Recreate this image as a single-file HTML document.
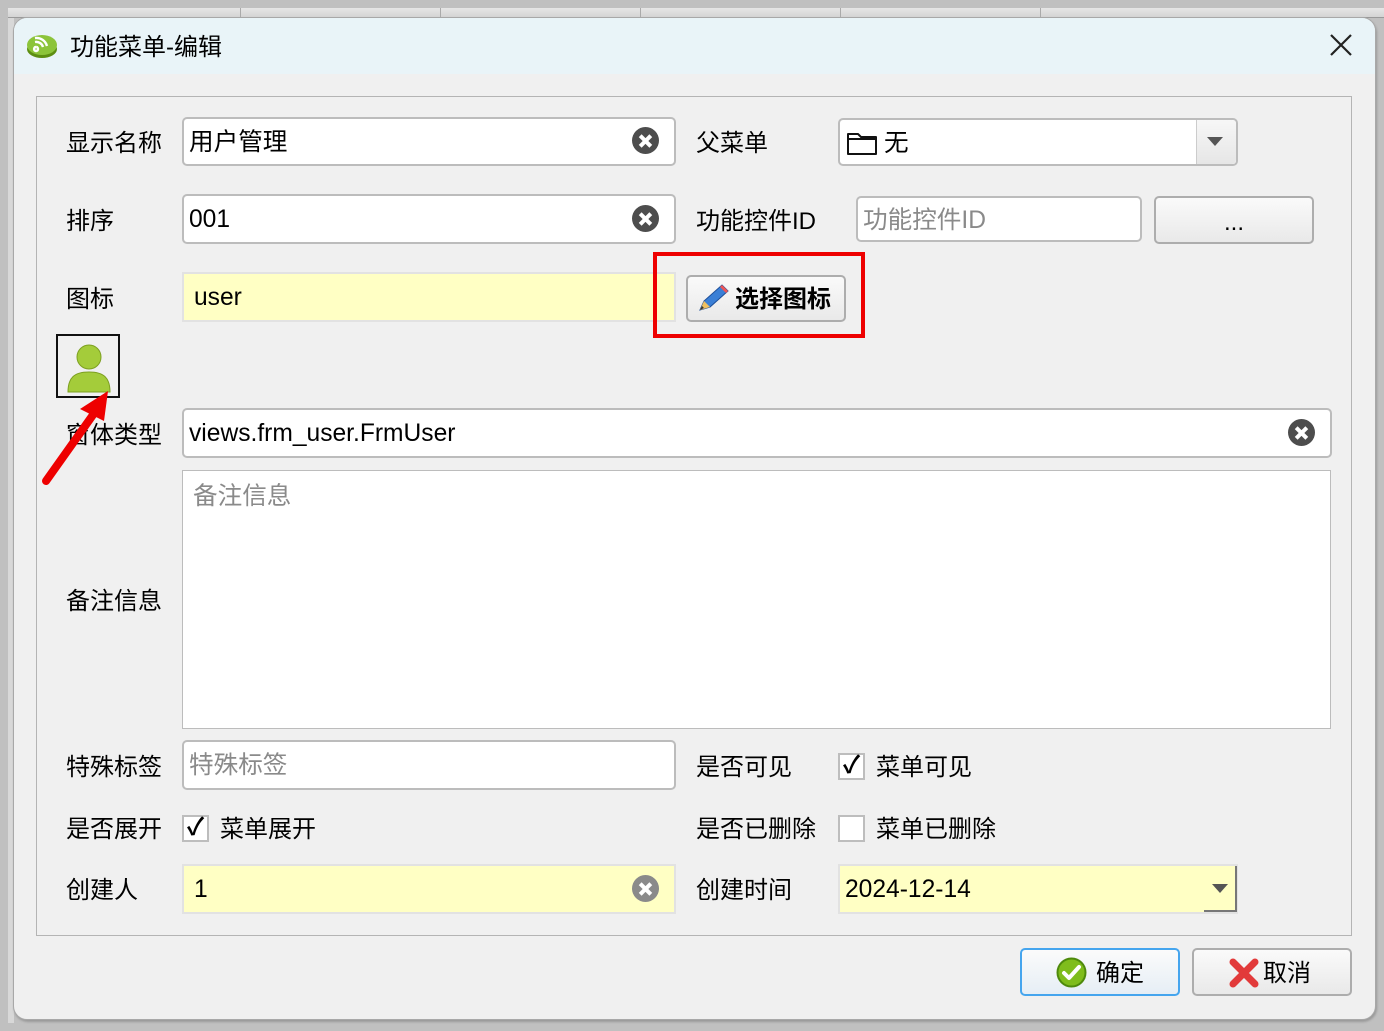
<!DOCTYPE html>
<html><head><meta charset="utf-8"><style>
*{margin:0;padding:0;box-sizing:border-box}
body{width:1384px;height:1031px;background:#c0c0c0;position:relative;overflow:hidden;font-family:"Liberation Sans","Microsoft YaHei","Noto Sans CJK SC",sans-serif;color:#000}
.a{position:absolute}
.lbl{position:absolute;font-size:24px;line-height:30px;white-space:nowrap;margin-top:2px}
.inp{position:absolute;background:#fff;border:2px solid #bcbcbc;border-radius:5px;font-size:24.6px;line-height:30px;padding:9px 0 0 5px;white-space:nowrap}
.yel{background:#ffffc4;border-color:#e2e2e2;border-radius:0}
.ph{color:#8a8a8a}
.clr{position:absolute;width:27px;height:27px;border-radius:50%;background:#4d4d4d}
.clr:before,.clr:after{content:"";position:absolute;left:6px;top:11.5px;width:15px;height:4px;background:#fff;transform:rotate(45deg)}
.clr:after{transform:rotate(-45deg)}
.btn{position:absolute;border:2px solid #adadad;border-radius:5px;background:linear-gradient(#fafafa,#e9e9e9);font-size:24px;text-align:center}
.cb{position:absolute;width:27px;height:27px;background:#fff;border:2px solid #bdbdbd;font-size:24px;line-height:22px;text-align:center;font-weight:bold}
</style></head><body>
<div class="a" style="left:8px;top:8px;width:1376px;height:10px;background:linear-gradient(#e6e6e6,#d4d4d4);border-bottom:1px solid #999"></div>
<div class="a" style="left:240px;top:8px;width:1px;height:10px;background:#aaa"></div>
<div class="a" style="left:440px;top:8px;width:1px;height:10px;background:#aaa"></div>
<div class="a" style="left:640px;top:8px;width:1px;height:10px;background:#aaa"></div>
<div class="a" style="left:840px;top:8px;width:1px;height:10px;background:#aaa"></div>
<div class="a" style="left:1040px;top:8px;width:1px;height:10px;background:#aaa"></div>
<div class="a" style="left:8px;top:18px;width:6px;height:1005px;background:#d8d8d8"></div>
<div class="a" style="left:13px;top:17px;width:1363px;height:1003px;background:#f0f0f0;border-radius:14px;border:1px solid #a8a8a8;box-shadow:1px 2px 2px #999;overflow:hidden">
 <div class="a" style="left:0;top:0;width:1363px;height:56px;background:#e9f4f8"></div>
</div>
<svg class="a" style="left:26px;top:30px" width="32" height="30" viewBox="0 0 32 30"><ellipse cx="16" cy="19" rx="15" ry="9" fill="#5d8e12"/><ellipse cx="16" cy="15" rx="15" ry="10" fill="#8cc43a"/><path d="M10 17a2 2 0 1 0 .1 0M9 12a7 7 0 0 1 8 5M9 8a11 11 0 0 1 12 8" stroke="#fff" stroke-width="2.4" fill="none"/></svg>
<div class="lbl" style="left:70px;top:31px">功能菜单-编辑</div>
<svg class="a" style="left:1329px;top:33px" width="24" height="24"><path d="M2 2L22 22M22 2L2 22" stroke="#222" stroke-width="2.2"/></svg>

<div class="a" style="left:36px;top:96px;width:1316px;height:840px;border:1px solid #b4b4b4"></div>

<div class="lbl" style="left:66px;top:127px">显示名称</div>
<div class="inp" style="left:182px;top:117px;width:494px;height:49px">用户管理</div>
<div class="clr" style="left:632px;top:127px"></div>
<div class="lbl" style="left:696px;top:127px">父菜单</div>
<div class="inp" style="left:838px;top:118px;width:400px;height:48px;padding-left:44px">无</div>
<svg class="a" style="left:846px;top:129px" width="32" height="28"><path d="M2 5h10l3 3h15v17H2z" fill="none" stroke="#111" stroke-width="2" stroke-linejoin="round"/><path d="M2 10h28" stroke="#111" stroke-width="2"/></svg>
<div class="a" style="left:1196px;top:120px;width:40px;height:44px;background:linear-gradient(#f7f7f7,#e6e6e6);border-left:1px solid #ccc;border-radius:0 4px 4px 0"></div>
<svg class="a" style="left:1207px;top:137px" width="16" height="10"><path d="M0 0h16L8 9z" fill="#555"/></svg>

<div class="lbl" style="left:66px;top:205px">排序</div>
<div class="inp" style="left:182px;top:194px;width:494px;height:50px">001</div>
<div class="clr" style="left:632px;top:205px"></div>
<div class="lbl" style="left:696px;top:205px">功能控件ID</div>
<div class="inp ph" style="left:856px;top:196px;width:286px;height:46px;padding-top:8px">功能控件ID</div>
<div class="btn" style="left:1154px;top:196px;width:160px;height:48px;line-height:50px">...</div>

<div class="lbl" style="left:66px;top:283px">图标</div>
<div class="inp yel" style="left:182px;top:272px;width:494px;height:50px;padding-left:10px">user</div>
<div class="a" style="left:653px;top:252px;width:212px;height:86px;border:4px solid #e00"></div>
<div class="btn" style="left:686px;top:275px;width:160px;height:47px;font-weight:bold;line-height:46px;padding-left:34px">选择图标</div>
<svg class="a" style="left:695px;top:282px" width="36" height="34"><path d="M5 28l4-9L27 3l6 6L15 25z" fill="#3a7fd6" stroke="#1d4f9a" stroke-width="1"/><path d="M5 28l4-9 6 6z" fill="#f0c060"/><path d="M5 28l2-4 2 2z" fill="#333"/><path d="M25 5l6 6 2-2-6-6z" fill="#e55"/></svg>

<div class="a" style="left:56px;top:334px;width:64px;height:64px;border:2px solid #111"></div>
<svg class="a" style="left:64px;top:340px" width="50" height="54"><circle cx="25" cy="17" r="12" fill="#a4cc3a" stroke="#7da020"/><path d="M4 52c0-14 6-20 21-20s21 6 21 20z" fill="#a4cc3a" stroke="#7da020"/></svg>
<div class="lbl" style="left:66px;top:419px">窗体类型</div>
<svg class="a" style="left:36px;top:385px" width="80" height="105"><path d="M10 96L64 20" stroke="#e00" stroke-width="8" stroke-linecap="round"/><path d="M72 6L44 24L68 36z" fill="#e00"/></svg>
<div class="inp" style="left:182px;top:408px;width:1150px;height:50px">views.frm_user.FrmUser</div>
<div class="clr" style="left:1288px;top:419px"></div>

<div class="inp ph" style="left:182px;top:470px;width:1149px;height:259px;border-width:1px;border-radius:0;padding:11px 0 0 10px">备注信息</div>
<div class="lbl" style="left:66px;top:585px">备注信息</div>

<div class="lbl" style="left:66px;top:751px">特殊标签</div>
<div class="inp ph" style="left:182px;top:740px;width:494px;height:50px">特殊标签</div>
<div class="lbl" style="left:696px;top:751px">是否可见</div>
<div class="cb" style="left:838px;top:753px">✓</div>
<div class="lbl" style="left:876px;top:751px">菜单可见</div>

<div class="lbl" style="left:66px;top:813px">是否展开</div>
<div class="cb" style="left:182px;top:815px">✓</div>
<div class="lbl" style="left:220px;top:813px">菜单展开</div>
<div class="lbl" style="left:696px;top:813px">是否已删除</div>
<div class="cb" style="left:838px;top:815px"></div>
<div class="lbl" style="left:876px;top:813px">菜单已删除</div>

<div class="lbl" style="left:66px;top:874px">创建人</div>
<div class="inp yel" style="left:182px;top:864px;width:494px;height:50px;padding-left:10px">1</div>
<div class="clr" style="left:632px;top:875px;background:#8a8a8a"></div>
<div class="lbl" style="left:696px;top:874px">创建时间</div>
<div class="inp yel" style="left:838px;top:864px;width:400px;height:50px">2024-12-14</div>
<div class="a" style="left:1204px;top:866px;width:33px;height:46px;background:#ffffc4;border-right:2px solid #777;border-bottom:2px solid #777"></div>
<svg class="a" style="left:1212px;top:884px" width="16" height="10"><path d="M0 0h16L8 9z" fill="#555"/></svg>

<div class="btn" style="left:1020px;top:948px;width:160px;height:48px;border-color:#45a5ee;background:linear-gradient(#fbfbfb,#e6eef5);line-height:48px;padding-left:40px">确定</div>
<svg class="a" style="left:1056px;top:957px" width="31" height="31"><circle cx="15.5" cy="15.5" r="14" fill="#7fbd1c" stroke="#4e8a0c" stroke-width="2"/><path d="M8 16l5 5 10-11" stroke="#fff" stroke-width="4" fill="none" stroke-linecap="round" stroke-linejoin="round"/></svg>
<div class="btn" style="left:1192px;top:948px;width:160px;height:48px;line-height:48px;padding-left:30px">取消</div>
<svg class="a" style="left:1229px;top:958px" width="30" height="30"><path d="M4 4L26 26M26 4L4 26" stroke="#e23a3a" stroke-width="7" stroke-linecap="round"/></svg>
</body></html>
